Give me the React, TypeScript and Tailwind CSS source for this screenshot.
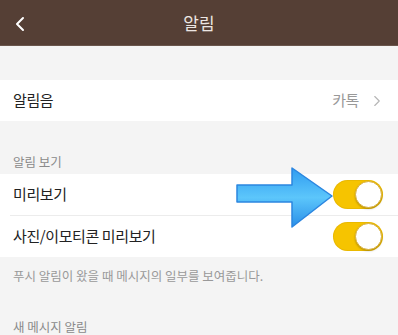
import { ChevronLeft, ChevronRight } from 'lucide-react';

function Toggle() {
    return (
        <div className="relative w-[50px] h-[29px] rounded-full bg-[#f6c400] shadow-[inset_0_0_0_1px_rgba(200,150,0,0.25)]">
            <div className="absolute right-[1px] top-[1px] w-[27px] h-[27px] rounded-full bg-white border border-[#d9b040] shadow-[0_1px_2px_rgba(0,0,0,0.25)]" />
        </div>
    );
}

function Arrow() {
    return (
        <svg className="absolute left-[236px] top-[167px]" width="98" height="62" viewBox="0 0 98 62">
            <defs>
                <linearGradient id="arrowFill" x1="0" y1="0" x2="0" y2="1">
                    <stop offset="0" stopColor="#2f9cf0" />
                    <stop offset="0.5" stopColor="#5cc6fb" />
                    <stop offset="1" stopColor="#2a8fe8" />
                </linearGradient>
            </defs>
            <path
                d="M1 18 L56 18 L56 1 L96 29 L56 60 L56 35 L1 35 Z"
                fill="url(#arrowFill)"
                stroke="#2b86e0"
                strokeWidth="1.5"
                strokeLinejoin="round"
            />
        </svg>
    );
}

export default function App() {
    return (
        <div className="relative w-[398px] h-[335px] overflow-hidden bg-[#f4f4f4] font-['Noto_Sans_CJK_KR',_'Noto_Sans',_sans-serif]">
            {/* header */}
            <div className="relative h-[46px] bg-[#553f35] border-b border-[#6a564c] flex items-center justify-center">
                <ChevronLeft className="absolute left-[8px] top-[12px] text-white" size={24} strokeWidth={2} />
                <span className="text-[17px] text-[#ece6e2]">알림</span>
            </div>

            <div className="h-[34px]" />

            <div className="h-[41px] bg-white flex items-center justify-between pl-[13px] pr-[12px]">
                <span className="text-[15px] tracking-[-0.4px] text-[#222]">알림음</span>
                <div className="flex items-center gap-[9px]">
                    <span className="text-[15px] tracking-[-0.4px] text-[#999]">카톡</span>
                    <ChevronRight className="text-[#b5b5b5]" size={18} strokeWidth={1.5} />
                </div>
            </div>

            <div className="h-[53px] flex items-end pl-[13px] pb-[3px]">
                <span className="text-[12.5px] leading-[18px] text-[#8a8a8a]">알림 보기</span>
            </div>

            <div className="bg-white">
                <div className="h-[41px] flex items-center justify-between pl-[13px] pr-[15px]">
                    <span className="text-[15px] tracking-[-0.4px] text-[#222]">미리보기</span>
                    <Toggle />
                </div>
                <div className="ml-[10px] h-px bg-[#ececec]" />
                <div className="h-[41px] flex items-center justify-between pl-[13px] pr-[15px]">
                    <span className="text-[15px] tracking-[-0.4px] text-[#222]">사진/이모티콘 미리보기</span>
                    <Toggle />
                </div>
            </div>

            <div className="pl-[13px] pt-[5px]">
                <span className="text-[12.5px] leading-[18px] text-[#999]">푸시 알림이 왔을 때 메시지의 일부를 보여줍니다.</span>
            </div>

            <div className="pl-[13px] pt-[27px]">
                <span className="text-[12.5px] leading-[18px] text-[#8a8a8a]">새 메시지 알림</span>
            </div>

            <Arrow />
        </div>
    );
}
